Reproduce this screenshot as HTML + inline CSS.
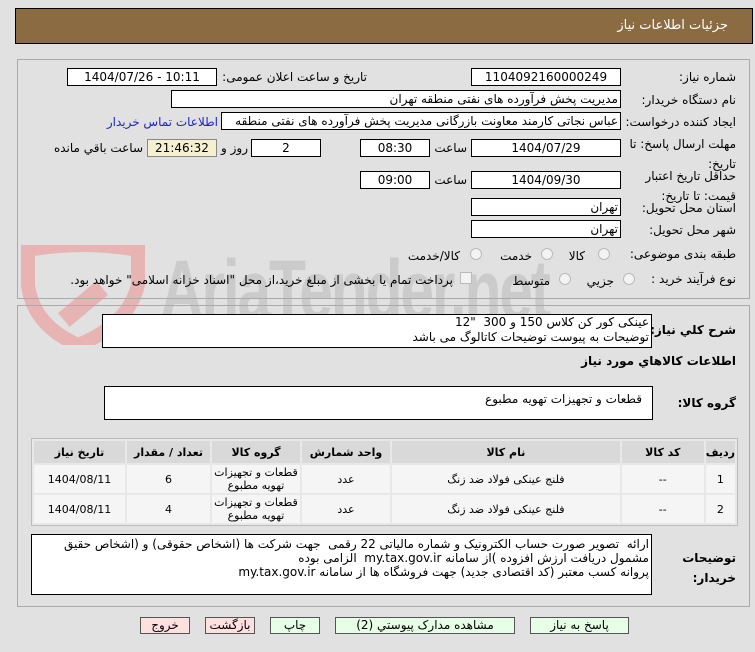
<!DOCTYPE html>
<html><head><meta charset="utf-8">
<style>
*{margin:0;padding:0;box-sizing:border-box}
body{width:755px;height:652px;background:#e1e1e1;font-family:Tahoma,"DejaVu Sans","Noto Sans CJK SC",sans-serif;font-size:12px;color:#000;position:relative;overflow:hidden}
.a{position:absolute;white-space:nowrap}
.box{position:absolute;background:#fff;border:1px solid #000;text-align:center;font-size:12px;line-height:16px}
.lbl{position:absolute;white-space:nowrap;direction:rtl;text-align:right;font-size:12px}
.r{right:19px}
.rad{position:absolute;width:12px;height:12px;border-radius:50%;border:1px solid #bbb;background:#f3f3f3}
.btn{position:absolute;top:617px;height:17px;border:1px solid #555;font-size:12px;line-height:15px;text-align:center;background:#e6ffe6}
.red{background:#ffe0e0}
table{border-collapse:separate;border-spacing:2px}
td,th{text-align:center;font-size:11px}
th{background:#d9d9d9;height:22px;font-weight:bold}
td{background:#f5f5f5;height:28px;line-height:13px}
</style></head><body>
<svg class="a" style="left:18px;top:245px" width="130" height="100"><path d="M10 5 Q65 -5 120 5 L120 40 Q110 80 60 100 Q15 80 10 40 Z" fill="none" stroke="#e8b3b3" stroke-width="14"/><rect x="40" y="50" width="50" height="18" fill="#e8b3b3" transform="rotate(-40 65 59)"/></svg>
<div class="a" style="left:160px;top:245px;font-size:84px;font-weight:bold;color:#cbcbcb;font-family:'Liberation Sans',sans-serif;letter-spacing:-3px;line-height:90px;transform:scaleX(0.72);transform-origin:0 0">AriaTender.net</div>

<div class="a" style="left:15px;top:8px;width:738px;height:36px;background:#8b6b42;border:1px solid #000"></div>
<div class="a" style="right:27px;top:18px;color:#fff;font-size:13px;direction:rtl">جزئیات اطلاعات نیاز</div>

<div class="a" style="left:17px;top:59px;width:733px;height:240px;border:1px solid #aaa"></div>
<div class="a" style="left:17px;top:305px;width:733px;height:302px;border:1px solid #aaa"></div>

<div class="lbl r" style="top:70px">شماره نیاز:</div>
<div class="box" style="left:471px;top:68px;width:150px;height:18px">1104092160000249</div>
<div class="lbl" style="right:388px;top:70px">تاریخ و ساعت اعلان عمومی:</div>
<div class="box" style="left:67px;top:68px;width:150px;height:18px">1404/07/26 - 10:11</div>

<div class="lbl r" style="top:93px">نام دستگاه خریدار:</div>
<div class="box" style="left:171px;top:90px;width:450px;height:18px;text-align:right;direction:rtl;padding-right:2px">مدیریت پخش فرآورده های نفتی منطقه تهران</div>

<div class="lbl r" style="top:115px">ایجاد کننده درخواست:</div>
<div class="box" style="left:221px;top:112px;width:400px;height:18px;text-align:right;direction:rtl;padding-right:2px;overflow:hidden">عباس نجاتی کارمند معاونت بازرگانی مدیریت پخش فرآورده های نفتی منطقه تهران</div>
<div class="lbl" style="right:537px;top:115px;color:#2222cc">اطلاعات تماس خریدار</div>

<div class="lbl r" style="top:134px;line-height:20px">مهلت ارسال پاسخ: تا<br>تاریخ:</div>
<div class="box" style="left:471px;top:139px;width:150px;height:18px">1404/07/29</div>
<div class="lbl" style="right:288px;top:141px">ساعت</div>
<div class="box" style="left:360px;top:139px;width:70px;height:18px">08:30</div>
<div class="box" style="left:251px;top:139px;width:70px;height:18px">2</div>
<div class="lbl" style="right:507px;top:141px">روز و</div>
<div class="box" style="left:147px;top:139px;width:70px;height:18px;background:#f5f0d0;border-color:#888">21:46:32</div>
<div class="lbl" style="right:612px;top:141px">ساعت باقي مانده</div>

<div class="lbl r" style="top:166px;line-height:20px">حداقل تاریخ اعتبار<br>قیمت: تا تاریخ:</div>
<div class="box" style="left:471px;top:171px;width:150px;height:18px">1404/09/30</div>
<div class="lbl" style="right:288px;top:173px">ساعت</div>
<div class="box" style="left:360px;top:171px;width:70px;height:18px">09:00</div>

<div class="lbl r" style="top:201px">استان محل تحویل:</div>
<div class="box" style="left:471px;top:198px;width:150px;height:18px;text-align:right;padding-right:2px">تهران</div>
<div class="lbl r" style="top:223px">شهر محل تحویل:</div>
<div class="box" style="left:471px;top:220px;width:150px;height:18px;text-align:right;padding-right:2px">تهران</div>

<div class="lbl r" style="top:247px">طبقه بندی موضوعی:</div>
<div class="rad" style="left:598px;top:248px"></div><div class="lbl" style="right:170px;top:249px">کالا</div>
<div class="rad" style="left:541px;top:248px"></div><div class="lbl" style="right:223px;top:249px">خدمت</div>
<div class="rad" style="left:470px;top:248px"></div><div class="lbl" style="right:295px;top:249px">کالا/خدمت</div>

<div class="lbl r" style="top:272px">نوع فرآیند خرید :</div>
<div class="rad" style="left:623px;top:273px"></div><div class="lbl" style="right:141px;top:274px">جزيي</div>
<div class="rad" style="left:559px;top:273px"></div><div class="lbl" style="right:205px;top:274px">متوسط</div>
<div class="a" style="left:460px;top:272px;width:12px;height:12px;border:1px solid #bbb;background:#f3f3f3"></div>
<div class="lbl" style="right:302px;top:273px">پرداخت تمام یا بخشی از مبلغ خرید،از محل "اسناد خزانه اسلامی" خواهد بود.</div>

<div class="lbl r" style="top:323px;font-weight:bold">شرح کلي نیاز:</div>
<div class="box" style="left:102px;top:314px;width:550px;height:34px;text-align:right;direction:rtl;padding-right:2px;line-height:15px">عینکی کور کن کلاس 150 و 300 &nbsp;"12<br>توضیحات به پیوست توضیحات کاتالوگ می باشد</div>
<div class="lbl r" style="top:354px;font-weight:bold">اطلاعات کالاهاي مورد نیاز</div>

<div class="lbl r" style="top:396px;font-weight:bold">گروه کالا:</div>
<div class="box" style="left:104px;top:386px;width:549px;height:34px;text-align:right;direction:rtl;padding:4px 10px 0 0">قطعات و تجهیزات تهویه مطبوع</div>

<div class="a" style="left:31px;top:438px;width:707px;height:88px;border:1px solid #bbb;background:#e8e8e8"></div>
<table class="a" style="left:32px;top:439px;width:705px;direction:rtl">
<tr><th style="width:27px">ردیف</th><th style="width:82px">کد کالا</th><th>نام کالا</th><th style="width:88px">واحد شمارش</th><th style="width:88px">گروه کالا</th><th style="width:83px">تعداد / مقدار</th><th style="width:91px">تاریخ نیاز</th></tr>
<tr><td>1</td><td>--</td><td>فلنج عینکی فولاد ضد زنگ</td><td>عدد</td><td>قطعات و تجهیزات<br>تهویه مطبوع</td><td>6</td><td>1404/08/11</td></tr>
<tr><td>2</td><td>--</td><td>فلنج عینکی فولاد ضد زنگ</td><td>عدد</td><td>قطعات و تجهیزات<br>تهویه مطبوع</td><td>4</td><td>1404/08/11</td></tr>
</table>

<div class="lbl r" style="top:548px;font-weight:bold;line-height:20px">توضیحات<br>خریدار:</div>
<div class="box" style="left:31px;top:534px;width:621px;height:61px;text-align:right;direction:rtl;padding:2px 2px 0 0;font-size:12px;line-height:14px">ارائه &nbsp;تصویر صورت حساب الکترونیک و شماره مالیاتی 22 رقمی &nbsp;جهت شرکت ها (اشخاص حقوقی) و (اشخاص حقیق<br>مشمول دریافت ارزش افزوده )از سامانه my.tax.gov.ir &nbsp;الزامی بوده<br>پروانه کسب معتبر (کد اقتصادی جدید) جهت فروشگاه ها از سامانه my.tax.gov.ir</div>

<div class="btn" style="left:530px;width:99px">پاسخ به نیاز</div>
<div class="btn" style="left:335px;width:180px">مشاهده مدارک پیوستي (2)</div>
<div class="btn" style="left:270px;width:50px">چاپ</div>
<div class="btn red" style="left:205px;width:50px">بازگشت</div>
<div class="btn red" style="left:140px;width:50px">خروج</div>
</body></html>
